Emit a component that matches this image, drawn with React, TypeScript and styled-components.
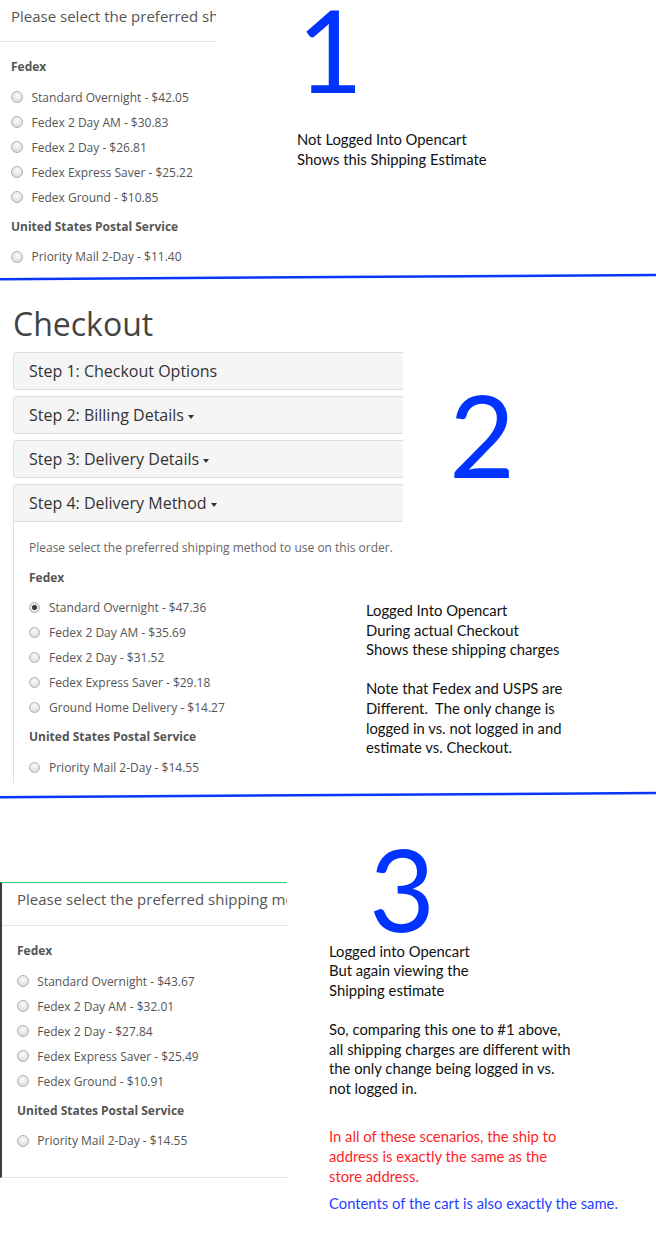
import React from "react";
import styled, { createGlobalStyle, css } from "styled-components";

const GlobalStyle = createGlobalStyle`
  html, body { margin: 0; padding: 0; background: #fff; }
  body { font-family: "Open Sans", "Liberation Sans", sans-serif; }
`;

const Page = styled.div`
  width: 656px;
  height: 1259px;
  display: flex;
  flex-direction: column;
  overflow: hidden;
  background: #fff;
`;

const Row = styled.section<{ $h: number }>`
  display: flex;
  align-items: flex-start;
  height: ${(p) => p.$h}px;
  flex-shrink: 0;
`;

const DividerSvg = styled.svg`
  display: block;
  flex-shrink: 0;
`;

function Divider() {
  return (
    <DividerSvg width="656" height="8" viewBox="0 0 656 8">
      <line x1="0" y1="6.2" x2="656" y2="2" stroke="#0a36ff" strokeWidth="2.4" />
    </DividerSvg>
  );
}

/* ---------- estimate panels (1 and 3) ---------- */

const EstimatePanel = styled.div<{ $w: number; $framed?: boolean }>`
  box-sizing: border-box;
  width: ${(p) => p.$w}px;
  flex-shrink: 0;
  overflow: hidden;
  ${(p) =>
    p.$framed &&
    css`
      margin-top: 83px;
      border-top: 1px solid #2ecc71;
      border-left: 2px solid #3d3d3d;
      border-bottom: 1px solid #e3e3e3;
    `}
`;

const EstimateHeader = styled.div<{ $pad: number; $top: number; $bottom: number }>`
  padding: ${(p) => p.$top}px 0 ${(p) => p.$bottom}px ${(p) => p.$pad}px;
  font-size: 15px;
  line-height: 20px;
  color: #555;
  white-space: nowrap;
  border-bottom: 1px solid #e5e5e5;
`;

const EstimateBody = styled.div<{ $pad: number; $bottom: number }>`
  padding: 16.4px 0 ${(p) => p.$bottom}px ${(p) => p.$pad}px;
`;

const GroupLabel = styled.div<{ $gap?: number }>`
  font-size: 12px;
  line-height: 18px;
  font-weight: 700;
  color: #555;
  white-space: nowrap;
  margin-top: ${(p) => p.$gap ?? 0}px;
  margin-bottom: 8.5px;
`;

const OptionRow = styled.label<{ $gap: number }>`
  display: flex;
  align-items: center;
  gap: ${(p) => p.$gap}px;
  height: 25px;
  font-size: 12px;
  color: #555;
  white-space: nowrap;
`;

const Radio = styled.span<{ $size: number; $checked?: boolean }>`
  box-sizing: border-box;
  width: ${(p) => p.$size}px;
  height: ${(p) => p.$size}px;
  border-radius: 50%;
  flex-shrink: 0;
  border: 1px solid #b0b0b0;
  background: ${(p) =>
    p.$checked
      ? "radial-gradient(circle, #3c3c3c 0 2.2px, #e9e9e9 2.8px, #d6d6d6 100%)"
      : "radial-gradient(circle at 50% 35%, #fbfbfb 0, #e6e6e6 55%, #cfcfcf 100%)"};
`;

type Opt = { label: string; checked?: boolean };
type Group = { title: string; options: Opt[] };

function Groups({ groups, radio, gap }: { groups: Group[]; radio: number; gap: number }) {
  return (
    <>
      {groups.map((g, gi) => (
        <div key={g.title}>
          <GroupLabel $gap={gi === 0 ? 0 : 8}>{g.title}</GroupLabel>
          {g.options.map((o) => (
            <OptionRow key={o.label} $gap={gap}>
              <Radio $size={radio} $checked={o.checked} />
              <span>{o.label}</span>
            </OptionRow>
          ))}
        </div>
      ))}
    </>
  );
}

/* ---------- checkout (2) ---------- */

const CheckoutRow = styled.section`
  height: 510px;
  flex-shrink: 0;
  display: grid;
  grid-template-columns: 13px 353px 37px 1fr;
  grid-template-rows: 320px 1fr;
`;

const CheckoutColumn = styled.div`
  grid-column: 2 / 4;
  grid-row: 1 / 3;
  display: flex;
  flex-direction: column;
`;

const Title = styled.h1`
  margin: 24.7px 0 10.3px;
  font-size: 32px;
  line-height: 36px;
  font-weight: 400;
  color: #444;
`;

const Panel = styled.div<{ $open?: boolean }>`
  border: 1px solid #ddd;
  border-right: none;
  border-radius: 4px 0 0 4px;
  ${(p) =>
    p.$open &&
    css`
      border-bottom: none;
      border-radius: 4px 0 0 0;
    `}
  & + & {
    margin-top: 6px;
  }
`;

const PanelHeading = styled.div<{ $open?: boolean }>`
  background: #f5f5f5;
  padding: 8px 15px;
  font-size: 16px;
  line-height: 20px;
  color: #333;
  white-space: nowrap;
  border-radius: 3px 0 0 ${(p) => (p.$open ? "0" : "3px")};
  ${(p) => p.$open && "border-bottom: 1px solid #ddd;"}
`;

const Caret = styled.span`
  display: inline-block;
  width: 0;
  height: 0;
  margin-left: 4px;
  vertical-align: middle;
  border-top: 4px solid #333;
  border-left: 3.5px solid transparent;
  border-right: 3.5px solid transparent;
`;

const PanelBody = styled.div`
  padding: 16.6px 0 3px 15px;
`;

const Intro = styled.p`
  margin: 0 0 12.4px;
  font-size: 12px;
  line-height: 18px;
  color: #666;
  white-space: nowrap;
`;

/* ---------- annotations ---------- */

const Note = styled.div<{ $left: number; $top: number }>`
  display: flex;
  flex-direction: column;
  margin-left: ${(p) => p.$left}px;
  padding-top: ${(p) => p.$top}px;
`;

const BigDigit = styled.div<{ $indent: number }>`
  font-family: Lato, "Open Sans", sans-serif;
  font-size: 114px;
  line-height: 82px;
  height: 82px;
  color: #0033ff;
  margin-left: ${(p) => p.$indent}px;
`;

const NoteText = styled.p<{ $gap?: number; $color?: string }>`
  margin: ${(p) => p.$gap ?? 0}px 0 0;
  font-family: Lato, "Open Sans", sans-serif;
  font-size: 14.8px;
  line-height: 19.6px;
  color: ${(p) => p.$color ?? "#111"};
  white-space: pre;
`;

const DigitCell = styled.div`
  grid-column: 4;
  grid-row: 1;
  padding-top: 111.6px;
`;

const NoteCell = styled.div`
  grid-column: 3 / 5;
  grid-row: 2;
`;

const estimate1: Group[] = [
  {
    title: "Fedex",
    options: [
      { label: "Standard Overnight - $42.05" },
      { label: "Fedex 2 Day AM - $30.83" },
      { label: "Fedex 2 Day - $26.81" },
      { label: "Fedex Express Saver - $25.22" },
      { label: "Fedex Ground - $10.85" },
    ],
  },
  { title: "United States Postal Service", options: [{ label: "Priority Mail 2-Day - $11.40" }] },
];

const checkout: Group[] = [
  {
    title: "Fedex",
    options: [
      { label: "Standard Overnight - $47.36", checked: true },
      { label: "Fedex 2 Day AM - $35.69" },
      { label: "Fedex 2 Day - $31.52" },
      { label: "Fedex Express Saver - $29.18" },
      { label: "Ground Home Delivery - $14.27" },
    ],
  },
  { title: "United States Postal Service", options: [{ label: "Priority Mail 2-Day - $14.55" }] },
];

const estimate3: Group[] = [
  {
    title: "Fedex",
    options: [
      { label: "Standard Overnight - $43.67" },
      { label: "Fedex 2 Day AM - $32.01" },
      { label: "Fedex 2 Day - $27.84" },
      { label: "Fedex Express Saver - $25.49" },
      { label: "Fedex Ground - $10.91" },
    ],
  },
  { title: "United States Postal Service", options: [{ label: "Priority Mail 2-Day - $14.55" }] },
];

export default function App() {
  return (
    <>
      <GlobalStyle />
      <Page>
        <Row $h={273}>
          <EstimatePanel $w={216}>
            <EstimateHeader $pad={11} $top={5.5} $bottom={15.5}>
              Please select the preferred shipping method to use on this order.
            </EstimateHeader>
            <EstimateBody $pad={11} $bottom={4}>
              <Groups groups={estimate1} radio={12} gap={8.5} />
            </EstimateBody>
          </EstimatePanel>
          <Note $left={81} $top={8.3}>
            <BigDigit $indent={0}>1</BigDigit>
            <NoteText $gap={40}>{"Not Logged Into Opencart\nShows this Shipping Estimate"}</NoteText>
          </Note>
        </Row>
        <Divider />
        <CheckoutRow>
          <CheckoutColumn>
            <Title>Checkout</Title>
            <Panel>
              <PanelHeading>Step 1: Checkout Options</PanelHeading>
            </Panel>
            <Panel>
              <PanelHeading>
                Step 2: Billing Details
                <Caret />
              </PanelHeading>
            </Panel>
            <Panel>
              <PanelHeading>
                Step 3: Delivery Details
                <Caret />
              </PanelHeading>
            </Panel>
            <Panel $open>
              <PanelHeading $open>
                Step 4: Delivery Method
                <Caret />
              </PanelHeading>
              <PanelBody>
                <Intro>Please select the preferred shipping method to use on this order.</Intro>
                <Groups groups={checkout} radio={11} gap={9} />
              </PanelBody>
            </Panel>
          </CheckoutColumn>
          <DigitCell>
            <BigDigit $indent={46}>2</BigDigit>
          </DigitCell>
          <NoteCell>
            <NoteText>
              {"Logged Into Opencart\nDuring actual Checkout\nShows these shipping charges\n\nNote that Fedex and USPS are\nDifferent.  The only change is\nlogged in vs. not logged in and\nestimate vs. Checkout."}
            </NoteText>
          </NoteCell>
        </CheckoutRow>
        <Divider />
        <Row $h={460}>
          <EstimatePanel $w={287} $framed>
            <EstimateHeader $pad={15} $top={6} $bottom={16}>
              Please select the preferred shipping method to use on this order.
            </EstimateHeader>
            <EstimateBody $pad={15} $bottom={23.5}>
              <Groups groups={estimate3} radio={12} gap={8.3} />
            </EstimateBody>
          </EstimatePanel>
          <Note $left={42} $top={47.6}>
            <BigDigit $indent={40}>3</BigDigit>
            <NoteText $gap={13}>
              {"Logged into Opencart\nBut again viewing the\nShipping estimate\n\nSo, comparing this one to #1 above,\nall shipping charges are different with\nthe only change being logged in vs.\nnot logged in."}
            </NoteText>
            <NoteText $gap={29} $color="#ff1f1f">
              {"In all of these scenarios, the ship to\naddress is exactly the same as the\nstore address."}
            </NoteText>
            <NoteText $gap={8} $color="#1f3fff">
              Contents of the cart is also exactly the same.
            </NoteText>
          </Note>
        </Row>
      </Page>
    </>
  );
}
